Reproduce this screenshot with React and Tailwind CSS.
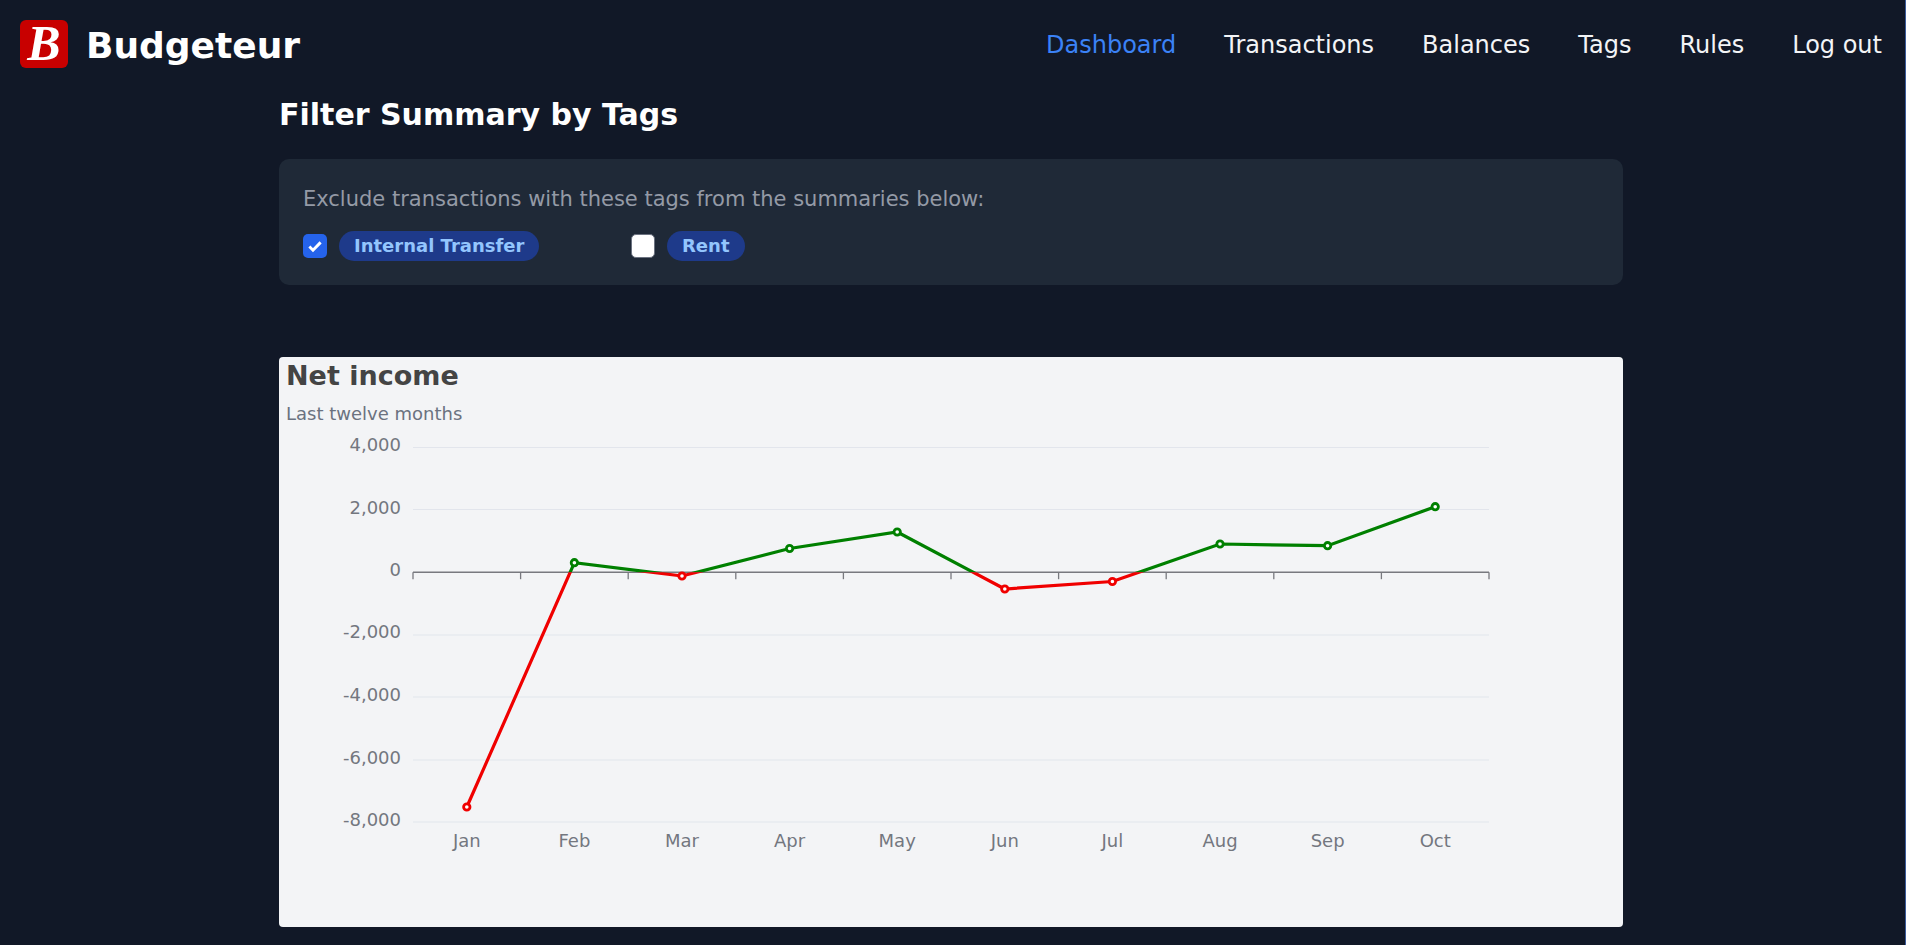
import React from "react";

const months = ["Jan","Feb","Mar","Apr","May","Jun","Jul","Aug","Sep","Oct"];
const ys = [807,562.7,576,548.5,532,589,581.5,544,545.7,506.7];
const left = 134, step = 107.6, zero = 215.2, top = 357;
const pts = ys.map((y,i)=>[left+step/2+step*i, y-top]);
const line = pts.map(p=>p.join(",")).join(" ");
const yLabels = [["4,000",90.5,89.5],["2,000",152.5,152.5],["0",215.2,214.5],["-2,000",278,277],["-4,000",340,339.5],["-6,000",403,403],["-8,000",465,465]];

function Chart(){
  return (
    <svg width="1344" height="569" className="block absolute left-0 top-0" style={{fontFamily:'"DejaVu Sans",sans-serif'}}>
      <defs>
        <clipPath id="above"><rect x="0" y="0" width="1344" height={zero}/></clipPath>
        <clipPath id="below"><rect x="0" y={zero} width="1344" height="400"/></clipPath>
      </defs>
      {yLabels.filter(l=>l[0]!=="0").map(l=>(
        <line key={l[0]} x1={left} x2={left+1076} y1={l[1]} y2={l[1]} stroke="#e2e5ec" strokeWidth="1.2"/>
      ))}
      <line x1={left} x2={left+1076} y1={zero} y2={zero} stroke="#78797f" strokeWidth="1.6"/>
      {Array.from({length:11}).map((_,i)=>(
        <line key={i} x1={left+step*i} x2={left+step*i} y1={zero} y2={zero+7} stroke="#78797f" strokeWidth="1.3"/>
      ))}
      {yLabels.map(l=>(
        <text key={l[0]} x="122" y={l[2]+4} textAnchor="end" fontSize="18" fill="#73777f">{l[0]}</text>
      ))}
      {months.map((m,i)=>(
        <text key={m} x={pts[i][0]} y="490" textAnchor="middle" fontSize="18" fill="#73777f">{m}</text>
      ))}
      <polyline points={line} fill="none" stroke="#008000" strokeWidth="3.2" clipPath="url(#above)"/>
      <polyline points={line} fill="none" stroke="#f00000" strokeWidth="3.2" clipPath="url(#below)"/>
      {pts.map((p,i)=>(
        <circle key={i} cx={p[0]} cy={p[1]} r="3.2" fill="#fff" stroke={ys[i]-top<zero?"#008000":"#f00000"} strokeWidth="2.8"/>
      ))}
    </svg>
  );
}

export default function App(){
  return (
    <div className="min-h-screen h-[945px] overflow-hidden bg-[#111827] text-white border-r border-[#3b5b9a]" style={{fontFamily:'"DejaVu Sans",sans-serif'}}>
      <nav className="flex items-start justify-between h-[70px] pl-5 pr-[23px] pt-5">
        <div className="flex items-start gap-[18px]">
          <div className="w-12 h-12 rounded-md bg-[#c80000] flex items-center justify-center text-white font-bold italic text-[50px] leading-none pb-[2px]" style={{fontFamily:'"Liberation Serif",serif'}}>B</div>
          <span className="text-[36px] leading-[48px] font-bold mt-[2px]">Budgeteur</span>
        </div>
        <div className="flex items-center gap-12 text-2xl leading-8 mt-[9px] text-[#f3f4f6]">
          <a className="text-[#3b82f6]">Dashboard</a>
          <a>Transactions</a>
          <a>Balances</a>
          <a>Tags</a>
          <a>Rules</a>
          <a>Log out</a>
        </div>
      </nav>
      <main className="w-[1344px] ml-[279px]">
        <h2 className="text-3xl leading-9 font-bold mt-[27px]">Filter Summary by Tags</h2>
        <div className="mt-[26px] h-[126px] rounded-[10px] bg-[#1f2937] pt-[26px] px-6">
          <p className="text-[21px] leading-7 text-[#949aa6]">Exclude transactions with these tags from the summaries below:</p>
          <div className="flex items-center mt-[18px]">
            <div className="flex items-center gap-3 w-[329px]">
              <span className="w-6 h-6 rounded-[5px] bg-[#2563eb] flex items-center justify-center">
                <svg width="18" height="18" viewBox="0 0 16 16" fill="none"><path d="M3 8.5l3.2 3.2L13 4.8" stroke="#fff" strokeWidth="2.6"/></svg>
              </span>
              <span className="h-[30px] px-[15px] rounded-full bg-[#1e3a8a] text-[#93c5fd] font-bold text-lg leading-[30px]">Internal Transfer</span>
            </div>
            <div className="flex items-center gap-3 -ml-px">
              <span className="w-6 h-6 rounded-[5px] bg-white border border-[#6b7280]"></span>
              <span className="h-[30px] px-[15px] rounded-full bg-[#1e3a8a] text-[#93c5fd] font-bold text-lg leading-[30px]">Rent</span>
            </div>
          </div>
        </div>
        <section className="relative mt-[72px] h-[570px] rounded bg-[#f3f4f6] pl-[7px] pt-[1px]">
          <Chart/>
          <h3 className="relative text-[27px] leading-9 font-bold text-[#444444]">Net income</h3>
          <p className="relative mt-[6px] text-lg leading-7 text-[#6b7280]">Last twelve months</p>
        </section>
      </main>
    </div>
  );
}
